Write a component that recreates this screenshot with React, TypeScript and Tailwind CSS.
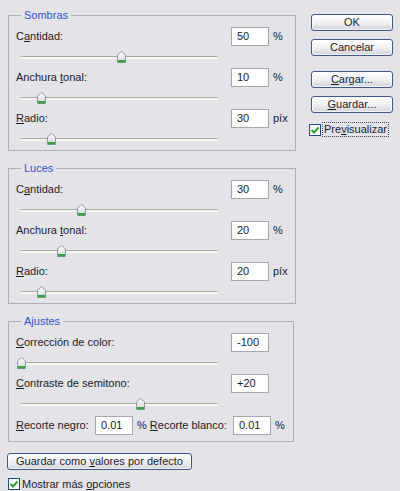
import React from "react";

type Param = {
  label: React.ReactNode;
  value: string;
  unit: string;
  thumb: number;
};

function K({ children }: { children: React.ReactNode }) {
  return <span className="underline underline-offset-[1px]">{children}</span>;
}

function Thumb({ x }: { x: number }) {
  return (
    <svg
      className="absolute top-[5px]"
      style={{ left: x - 20.5 }}
      width="9"
      height="12"
      viewBox="0 0 9 12"
    >
      <defs>
        <linearGradient id="tg" x1="0" y1="0" x2="0" y2="1">
          <stop offset="0" stopColor="#ffffff" />
          <stop offset="1" stopColor="#d4d4d8" />
        </linearGradient>
      </defs>
      <path
        d="M0.5 4 L4.5 0.5 L8.5 4 V11.5 H0.5 Z"
        fill="url(#tg)"
        stroke="#8c97a4"
      />
      <rect x="1" y="9" width="7" height="2.5" fill="#2fa83a" />
    </svg>
  );
}

function Slider({ x }: { x: number }) {
  return (
    <div className="relative h-[22px]">
      <div className="absolute left-[4px] top-[10px] h-[3px] w-[198px] rounded-full border-t border-[#a9a9a4] bg-[#f6f5ec]" />
      <Thumb x={x} />
    </div>
  );
}

function Field({ value }: { value: string }) {
  return (
    <div className="flex h-[19px] w-[38px] items-center border border-[#a6a6ae] bg-white pl-[5px] text-[#1c1c28]">
      {value}
    </div>
  );
}

function Row({ p }: { p: Param }) {
  return (
    <div>
      <div className="flex h-[19px] items-center">
        <span className="w-[215px]">{p.label}</span>
        <Field value={p.value} />
        <span className="ml-[4px]">{p.unit}</span>
      </div>
      <Slider x={p.thumb} />
    </div>
  );
}

function Group({
  title,
  children,
  className = "",
}: {
  title: string;
  children: React.ReactNode;
  className?: string;
}) {
  return (
    <fieldset className={`border border-[#aeaeb6] ${className}`}>
      <legend className="ml-[12px] px-[3px] leading-[14px] text-[#2f55d4]">
        {title}
      </legend>
      <div className="px-[7px] pt-[5px]">{children}</div>
    </fieldset>
  );
}

function Button({
  children,
  className = "",
}: {
  children: React.ReactNode;
  className?: string;
}) {
  return (
    <div
      className={`flex h-[17px] items-center justify-center rounded-[3px] border border-[#3b5a86] bg-linear-to-b from-white via-[#f1f1f4] to-[#d3d3dc] text-[#1c1c28] shadow-[inset_0_0_0_1px_rgba(255,255,255,0.7)] ${className}`}
    >
      <span>{children}</span>
    </div>
  );
}

function Check() {
  return (
    <svg width="12" height="12" viewBox="0 0 12 12" className="shrink-0">
      <rect x="0.5" y="0.5" width="11" height="11" fill="#fbfbfb" stroke="#1f4f7e" />
      <path
        d="M2.5 6 L5 8.5 L9.5 3.5"
        fill="none"
        stroke="#22a22a"
        strokeWidth="2"
      />
    </svg>
  );
}

const sombras: Param[] = [
  { label: <>C<K>a</K>ntidad:</>, value: "50", unit: "%", thumb: 121 },
  { label: <>Anchura <K>t</K>onal:</>, value: "10", unit: "%", thumb: 41 },
  { label: <><K>R</K>adio:</>, value: "30", unit: "píx", thumb: 51 },
];

const luces: Param[] = [
  { label: <>C<K>a</K>ntidad:</>, value: "30", unit: "%", thumb: 81 },
  { label: <>Anchura <K>t</K>onal:</>, value: "20", unit: "%", thumb: 61 },
  { label: <><K>R</K>adio:</>, value: "20", unit: "píx", thumb: 41 },
];

const ajustes: Param[] = [
  { label: <><K>C</K>orrección de color:</>, value: "-100", unit: "", thumb: 21 },
  { label: <><K>C</K>ontraste de semitono:</>, value: "+20", unit: "", thumb: 140 },
];

export default function App() {
  return (
    <div className="flex h-[491px] w-[400px] bg-[#e3e3e8] font-['Liberation_Sans',Arial,sans-serif] text-[11px] text-[#1c1c28]">
      <div className="ml-[8px] mt-[8px] flex w-[286px] flex-col">
        <Group title="Sombras">
          {sombras.map((p, i) => (
            <Row key={i} p={p} />
          ))}
        </Group>

        <Group title="Luces" className="mt-[10px]">
          {luces.map((p, i) => (
            <Row key={i} p={p} />
          ))}
        </Group>

        <Group title="Ajustes" className="mt-[10px]">
          {ajustes.map((p, i) => (
            <Row key={i} p={p} />
          ))}
          <div className="mb-[6px] mt-[1px] flex h-[19px] items-center">
            <span className="w-[79px]">
              <K>R</K>ecorte negro:
            </span>
            <Field value="0.01" />
            <span className="ml-[4px] w-[96px]">
              % <K>R</K>ecorte blanco:
            </span>
            <Field value="0.01" />
            <span className="ml-[4px]">%</span>
          </div>
        </Group>

        <Button className="-ml-[1px] mt-[11px] w-[185px]">
          Guardar como <K>v</K>alores por defecto
        </Button>

        <div className="mt-[6px] flex items-center">
          <Check />
          <span className="ml-[2px]">
            Mostrar más <K>o</K>pciones
          </span>
        </div>
      </div>

      <div className="ml-[17px] flex w-[82px] flex-col pt-[14px]">
        <Button>OK</Button>
        <Button className="mt-[8px]">Cancelar</Button>
        <Button className="mt-[15px]">
          <K>C</K>argar...
        </Button>
        <Button className="mt-[8px]">
          <K>G</K>uardar...
        </Button>
        <div className="-ml-[2px] mt-[9px] flex h-[15px] items-center">
          <Check />
          <span className="ml-[1px] border border-dotted border-[#4a4a55] px-[1px] leading-[13px]">
            Pre<K>v</K>isualizar
          </span>
        </div>
      </div>
    </div>
  );
}
